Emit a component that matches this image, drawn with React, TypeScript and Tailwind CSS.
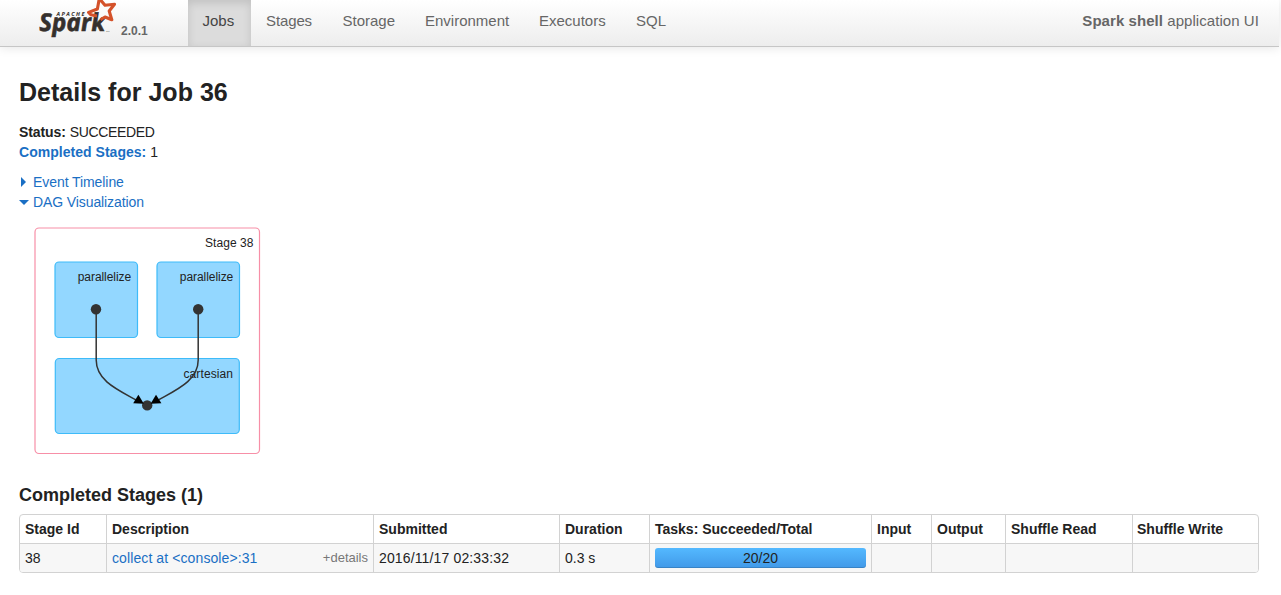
import React from "react";

const tabs = [
  { label: "Stages", cls: "w-[76.5px] tracking-[-0.12px]" },
  { label: "Storage", cls: "w-[82.5px]" },
  { label: "Environment", cls: "w-[114px]" },
  { label: "Executors", cls: "w-[97px]" },
  { label: "SQL", cls: "w-[60px]" },
];

const columns = [
  "Stage Id",
  "Description",
  "Submitted",
  "Duration",
  "Tasks: Succeeded/Total",
  "Input",
  "Output",
  "Shuffle Read",
  "Shuffle Write",
];

function Logo() {
  return (
    <svg width="82" height="40" viewBox="0 0 82 40" className="block shrink-0" aria-label="Apache Spark">
      <g transform="translate(1.4 31) skewX(3)">
        <text
          x="0"
          y="0"
          className="fill-[#35302c] stroke-[#35302c] stroke-[0.6px] font-['Open_Sans',sans-serif] text-[24.5px] font-bold italic"
          textRendering="geometricPrecision"
          textLength="66"
          lengthAdjust="spacingAndGlyphs"
        >
          Spark
        </text>
      </g>
      <text
        x="18.5"
        y="15.8"
        textLength="28"
        textRendering="geometricPrecision"
        className="fill-[#35302c] font-['Open_Sans',sans-serif] text-[5.6px] font-bold italic"
      >
        APACHE
      </text>
      <path
        d="M59 16 L53 14.8 L50.6 12.4 L59.4 9 L61.3 -1.5 L67 5.2 L76.5 4.2 L71.2 11 L73.8 19.8 L67 17 L62.5 19.8"
        fill="none"
        stroke="#d4522a"
        strokeWidth="3.1"
        strokeLinejoin="round"
      />
      <text x="68" y="32" className="fill-[#55504c] font-['Liberation_Sans',sans-serif] text-[2.5px]">
        TM
      </text>
    </svg>
  );
}

function Dag() {
  return (
    <svg width="227" height="228" viewBox="34 227 227 228" className="ml-[15px] block font-['Liberation_Sans',sans-serif] text-[12px]">
      <rect x="35" y="228" width="224.5" height="225.5" rx="4" fill="#fff" stroke="#f78fa7" strokeWidth="1.2" />
      <g fill="#93d7ff" stroke="#3ebbf9" strokeWidth="1.2">
        <rect x="55" y="262" width="82.5" height="75.5" rx="4" />
        <rect x="157" y="262" width="82.5" height="75.5" rx="4" />
        <rect x="55.3" y="358.5" width="184" height="75" rx="4" />
      </g>
      <g fill="#222">
        <text x="205" y="247" textLength="48.5">Stage 38</text>
        <text x="77.7" y="281" textLength="53.5">parallelize</text>
        <text x="179.8" y="281" textLength="53.5">parallelize</text>
        <text x="183.5" y="378" textLength="49.5">cartesian</text>
      </g>
      <g fill="#333">
        <circle cx="96" cy="309.2" r="5.2" />
        <circle cx="198.2" cy="309.2" r="5.2" />
        <circle cx="147.2" cy="405.4" r="5.2" />
      </g>
      <g fill="none" stroke="#333" strokeWidth="1.5">
        <path d="M96.2 309 V360 C96.2 380 116 389 136 400" />
        <path d="M198.2 309 V360 C198.2 380 178 389 158.4 400" />
      </g>
      <path d="M143.8 403.8 L133.2 403.2 L138.4 394.8 z" fill="#000" />
      <path d="M150.6 403.8 L161.4 403.2 L156 394.8 z" fill="#000" />
    </svg>
  );
}

export default function App() {
  return (
    <div className="h-[595px] w-[1281px] overflow-hidden bg-white font-['Liberation_Sans',Arial,sans-serif] text-[14px] leading-5 text-[#222]">
      <header className="flex h-[47px] w-[1279px] border-b border-[#c6c6c6] bg-linear-to-b from-white to-[#ededed] pl-[38px] text-[15px] text-[#666] shadow-[0_1px_10px_rgba(0,0,0,0.1)]">
        <Logo />
        <span className="w-[68px] pt-[21px] pl-px text-[12px] leading-5 font-bold">2.0.1</span>
        <nav className="flex flex-1 leading-[42px]">
          <a className="h-[46px] w-[63px] bg-[#dcdcdc] pl-[14.5px] text-[#444] shadow-[inset_0_3px_8px_rgba(0,0,0,0.125)]">Jobs</a>
          {tabs.map((t) => (
            <a key={t.label} className={`${t.cls} pl-[15px]`}>{t.label}</a>
          ))}
        </nav>
        <p className="pr-5 leading-[42px] tracking-[0.06px]"><strong>Spark shell</strong> application UI</p>
      </header>
      <main className="pl-[19px]">
        <h3 className="pt-[25px] text-[25px] leading-10 font-bold tracking-[0.02px]">Details for Job 36</h3>
        <ul className="pt-[10px]">
          <li><strong className="tracking-[-0.1px]">Status:</strong> <span className="tracking-[-0.35px]">SUCCEEDED</span></li>
          <li><strong className="tracking-[0.03px] text-[#1a6fc4]">Completed Stages:</strong> 1</li>
        </ul>
        <div className="pt-[10px] text-[#1a6fc4]">
          <div className="flex items-center">
            <svg width="14" height="12"><path d="M2 1 L7 6 L2 11 z" fill="currentColor" /></svg>
            <span className="tracking-[-0.07px]">Event Timeline</span>
          </div>
          <div className="flex items-center">
            <svg width="14" height="12"><path d="M0 4 H10 L5 9 z" fill="currentColor" /></svg>
            <span className="tracking-[-0.1px]">DAG Visualization</span>
          </div>
        </div>
        <div className="pt-[15px]"><Dag /></div>
        <h4 className="pt-[30px] text-[18px] leading-5 font-bold">Completed Stages (1)</h4>
        <div className="mt-[9px] w-[1240px] overflow-hidden rounded-[4px] border border-[#d2d2d2]">
          <div className="grid h-[28px] grid-cols-[87px_267px_186px_90px_222px_60px_74px_127px_125px] leading-7 font-bold">
            {columns.map((c, i) => (
              <div key={c} className={i === 8 ? "pl-[4px]" : "border-r border-[#d2d2d2] pl-[5px]"}>{c}</div>
            ))}
          </div>
          <div className="grid h-[29px] grid-cols-[87px_267px_186px_90px_222px_60px_74px_127px_125px] border-t border-[#d2d2d2] bg-[#f7f7f7] leading-7 [&>div:not(:last-child)]:border-r [&>div:not(:last-child)]:border-[#d2d2d2]">
            <div className="pl-[5px]">38</div>
            <div className="flex justify-between px-[5px]">
              <span className="tracking-[0.1px] text-[#1a6fc4]">collect at &lt;console&gt;:31</span>
              <span className="text-[13px] text-[#777]">+details</span>
            </div>
            <div className="pl-[5px] tracking-[0.14px]">2016/11/17 02:33:32</div>
            <div className="pl-[5px]">0.3 s</div>
            <div className="px-[5px] pt-1">
              <div className="h-5 rounded-[3px] bg-linear-to-b from-[#54b9ff] to-[#4199e8] text-center leading-5 shadow-[inset_0_-1px_0_rgba(0,0,0,0.15)]">20/20</div>
            </div>
            <div /><div /><div /><div />
          </div>
        </div>
      </main>
    </div>
  );
}
